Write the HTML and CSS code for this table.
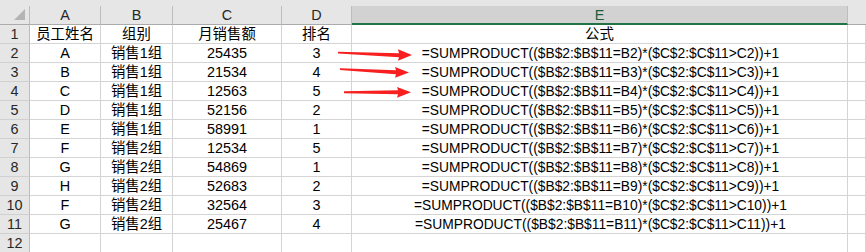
FILE: index.html
```html
<!DOCTYPE html>
<html lang="zh-CN">
<head>
<meta charset="utf-8">
<link rel="stylesheet" href="styles.css">
</head>
<body>
<div class="sheet">
  <div class="topstrip"></div>
  <div class="grid">
    <div class="corner"><span class="tri"></span></div>
    <div class="ch">A</div>
    <div class="ch">B</div>
    <div class="ch">C</div>
    <div class="ch">D</div>
    <div class="ch sel">E</div>
    <div class="ch last"></div>

    <div class="rh">1</div><div class="c">员工姓名</div><div class="c">组别</div><div class="c">月销售额</div><div class="c">排名</div><div class="c">公式</div><div class="c"></div>
    <div class="rh">2</div><div class="c">A</div><div class="c">销售1组</div><div class="c">25435</div><div class="c">3</div><div class="c f">=SUMPRODUCT(($B$2:$B$11=B2)*($C$2:$C$11&gt;C2))+1</div><div class="c"></div>
    <div class="rh">3</div><div class="c">B</div><div class="c">销售1组</div><div class="c">21534</div><div class="c">4</div><div class="c f">=SUMPRODUCT(($B$2:$B$11=B3)*($C$2:$C$11&gt;C3))+1</div><div class="c"></div>
    <div class="rh">4</div><div class="c">C</div><div class="c">销售1组</div><div class="c">12563</div><div class="c">5</div><div class="c f">=SUMPRODUCT(($B$2:$B$11=B4)*($C$2:$C$11&gt;C4))+1</div><div class="c"></div>
    <div class="rh">5</div><div class="c">D</div><div class="c">销售1组</div><div class="c">52156</div><div class="c">2</div><div class="c f">=SUMPRODUCT(($B$2:$B$11=B5)*($C$2:$C$11&gt;C5))+1</div><div class="c"></div>
    <div class="rh">6</div><div class="c">E</div><div class="c">销售1组</div><div class="c">58991</div><div class="c">1</div><div class="c f">=SUMPRODUCT(($B$2:$B$11=B6)*($C$2:$C$11&gt;C6))+1</div><div class="c"></div>
    <div class="rh">7</div><div class="c">F</div><div class="c">销售2组</div><div class="c">12534</div><div class="c">5</div><div class="c f">=SUMPRODUCT(($B$2:$B$11=B7)*($C$2:$C$11&gt;C7))+1</div><div class="c"></div>
    <div class="rh">8</div><div class="c">G</div><div class="c">销售2组</div><div class="c">54869</div><div class="c">1</div><div class="c f">=SUMPRODUCT(($B$2:$B$11=B8)*($C$2:$C$11&gt;C8))+1</div><div class="c"></div>
    <div class="rh">9</div><div class="c">H</div><div class="c">销售2组</div><div class="c">52683</div><div class="c">2</div><div class="c f">=SUMPRODUCT(($B$2:$B$11=B9)*($C$2:$C$11&gt;C9))+1</div><div class="c"></div>
    <div class="rh">10</div><div class="c">F</div><div class="c">销售2组</div><div class="c">32564</div><div class="c">3</div><div class="c f">=SUMPRODUCT(($B$2:$B$11=B10)*($C$2:$C$11&gt;C10))+1</div><div class="c"></div>
    <div class="rh">11</div><div class="c">G</div><div class="c">销售2组</div><div class="c">25467</div><div class="c">4</div><div class="c f">=SUMPRODUCT(($B$2:$B$11=B11)*($C$2:$C$11&gt;C11))+1</div><div class="c"></div>
    <div class="rh">12</div><div class="c"></div><div class="c"></div><div class="c"></div><div class="c"></div><div class="c"></div><div class="c"></div>
  </div>
  <svg class="arrows" width="866" height="252" viewBox="0 0 866 252">
    <polygon points="338,51.8 399,53.2 398,49.2 412,55.1 398,60.8 399,57.2 338,53.6"/>
    <polygon points="340,68.3 396,70.2 395,67.0 409,72.4 395,77.8 396,74.2 340,70.1"/>
    <polygon points="344,91.2 398,90.2 397,87.0 411,92.3 397,97.8 398,94.2 344,93.2"/>
  </svg>
</div>
</body>
</html>
```

FILE: styles.css
```css
html, body {
  margin: 0;
  padding: 0;
  background: #ffffff;
}

.sheet {
  position: relative;
  width: 866px;
  height: 252px;
  overflow: hidden;
  font-family: "Liberation Sans", "Noto Sans CJK SC", sans-serif;
  font-size: 14.4px;
  color: #000;
}

.topstrip {
  height: 6px;
  background: #e6e6e6;
}

.grid {
  display: grid;
  grid-template-columns: 30px 71px 72px 109px 70px 496px 1fr;
  grid-template-rows: 19px;
  grid-auto-rows: 19px;
}

.grid > div {
  box-sizing: border-box;
  display: flex;
  align-items: center;
  justify-content: center;
  white-space: nowrap;
  overflow: visible;
  line-height: 1;
  padding-top: 1px;
}

.grid > .f {
  font-size: 13.8px;
  padding-left: 2px;
}

.corner {
  position: relative;
  background: #e6e6e6;
  border-right: 1px solid #bdbdbd;
  border-bottom: 1px solid #ababab;
}

.tri {
  position: absolute;
  right: 4px;
  bottom: 4px;
  width: 0;
  height: 0;
  border-left: 11px solid transparent;
  border-bottom: 11px solid #b4b4b4;
}

.ch {
  background: #e6e6e6;
  border-right: 1px solid #bdbdbd;
  border-bottom: 1px solid #ababab;
  color: #262626;
}

.ch.sel {
  background: #d2d2d2;
  border-bottom: 2px solid #217346;
  color: #1b5e3a;
}

.ch.last {
  border-right: none;
}

.rh {
  background: #e6e6e6;
  border-right: 1px solid #bdbdbd;
  border-bottom: 1px solid #d0d0d0;
  color: #262626;
}

.c {
  border-right: 1px solid #d4d4d4;
  border-bottom: 1px solid #d4d4d4;
}

.arrows {
  position: absolute;
  left: 0;
  top: 0;
  pointer-events: none;
}

.arrows polygon {
  fill: #f71f1f;
}
```
